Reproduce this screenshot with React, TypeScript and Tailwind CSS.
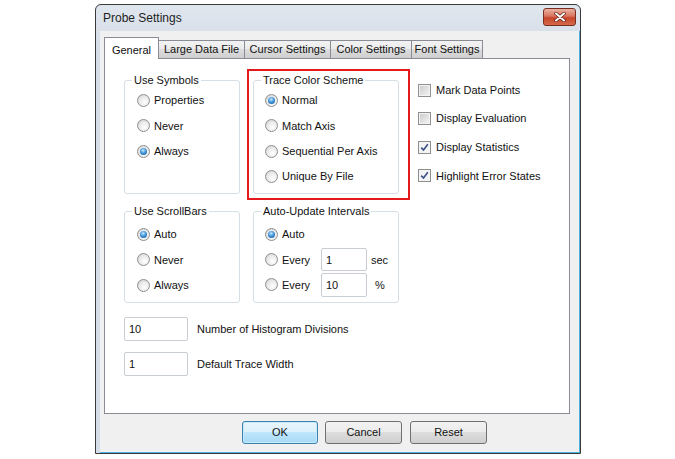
import type { ReactNode } from "react";

function Radio({ checked }: { checked?: boolean }) {
  return (
    <span className="flex h-[13px] w-[13px] shrink-0 items-center justify-center rounded-full border border-[#8e8f8f] bg-[radial-gradient(circle_at_60%_65%,#ffffff,#e8e8e8_55%,#c9c9c9)]">
      {checked && (
        <span className="h-[7px] w-[7px] rounded-full bg-[radial-gradient(circle_at_45%_35%,#c4e8ff,#3a8fd4_50%,#16518c)]" />
      )}
    </span>
  );
}

function RadioRow({ label, checked }: { label: string; checked?: boolean }) {
  return (
    <div className="flex h-[25.3px] items-center gap-[4px]">
      <Radio checked={checked} />
      <span>{label}</span>
    </div>
  );
}

function GroupBox({ label, className, children }: { label: string; className: string; children: ReactNode }) {
  return (
    <div className={`relative rounded-[3px] border border-[#d5dfe5] ${className}`}>
      <span className="absolute -top-[8px] left-[7px] bg-white px-[2px] leading-[14px]">{label}</span>
      {children}
    </div>
  );
}

function Checkbox({ label, checked }: { label: string; checked?: boolean }) {
  return (
    <div className="flex h-[16px] items-center gap-[5px]">
      <span className="flex h-[13px] w-[13px] shrink-0 items-center justify-center border border-[#8e8f8f] bg-[#f4f4f4] p-[1px]">
        {checked ? (
          <svg width="9" height="9" viewBox="0 0 9 9">
            <path d="M1.2 4.6 L3.5 7 L7.8 1.2" fill="none" stroke="#3d4f8a" strokeWidth="1.6" />
          </svg>
        ) : (
          <span className="h-full w-full bg-[linear-gradient(135deg,#cfcfcf,#f1f1f1)]" />
        )}
      </span>
      <span>{label}</span>
    </div>
  );
}

function TextBox({ value, className }: { value: string; className: string }) {
  return (
    <div className={`flex items-center rounded-[2px] border border-[#c9cdd4] bg-white pl-[4px] ${className}`}>
      {value}
    </div>
  );
}

const tabs = [
  { label: "General", w: "w-[55px]" },
  { label: "Large Data File", w: "w-[86px]" },
  { label: "Cursor Settings", w: "w-[86px]" },
  { label: "Color Settings", w: "w-[81px]" },
  { label: "Font Settings", w: "w-[71px]" },
];

export default function App() {
  return (
    <div className="min-h-screen bg-white pl-[95px] pt-[4px] font-['Liberation_Sans',Arial,sans-serif] text-[11px] text-[#111]">
      <div className="flex h-[450px] w-[486px] flex-col rounded-t-[6px] border border-[#3a3a3a] bg-[linear-gradient(#e0e6ee,#d5dde8_40px,#d5dde8)]">
        {/* title bar */}
        <div className="flex h-[26px] shrink-0 items-start justify-between pl-[7px] pr-[4px]">
          <span className="mt-[6px] text-[12px] leading-[15px] text-[#1e1e1e]">Probe Settings</span>
          <div className="mt-[3px] flex h-[18px] w-[33px] items-center justify-center rounded-[3px] border border-[#7a2c1e] bg-[linear-gradient(#eab2a4,#d9735e_45%,#c7452c_55%,#d66a4c)]">
            <svg width="12" height="10" viewBox="0 0 12 10">
              <path d="M2 1.5 L10 8.5 M10 1.5 L2 8.5" stroke="#5a1a10" strokeWidth="3.4" strokeLinecap="round" />
              <path d="M2 1.5 L10 8.5 M10 1.5 L2 8.5" stroke="#ffffff" strokeWidth="2" strokeLinecap="round" />
            </svg>
          </div>
        </div>

        {/* client */}
        <div className="ml-[4px] flex flex-1 flex-col border-r border-b border-[#4fb0e2] bg-[#f0f0f0] pt-[6px]">
          <div className="flex h-[21px] items-end pl-[4px]">
            {tabs.map((t, i) =>
              i === 0 ? (
                <div
                  key={t.label}
                  className={`relative z-10 -mb-px flex h-[22px] ${t.w} items-start justify-center border border-b-0 border-[#898c95] bg-white pt-[4px]`}
                >
                  {t.label}
                </div>
              ) : (
                <div
                  key={t.label}
                  className={`flex h-[18px] ${t.w} items-center justify-center border border-b-0 border-l-0 border-[#898c95] bg-[linear-gradient(#f2f2f2,#ebebeb_50%,#dddddd_50%,#cfcfcf)]`}
                >
                  {t.label}
                </div>
              )
            )}
          </div>

          {/* panel */}
          <div className="ml-[4px] h-[356px] w-[466px] border border-[#898c95] bg-white pl-[19px] pt-[21px]">
            <div className="flex items-start">
              <GroupBox label="Use Symbols" className="h-[114px] w-[116px] pl-[12px] pt-[7px]">
                <RadioRow label="Properties" />
                <RadioRow label="Never" />
                <RadioRow label="Always" checked />
              </GroupBox>

              <div className="relative ml-[13px]">
                <GroupBox label="Trace Color Scheme" className="h-[114px] w-[146px] pl-[11px] pt-[7px]">
                  <RadioRow label="Normal" checked />
                  <RadioRow label="Match Axis" />
                  <RadioRow label="Sequential Per Axis" />
                  <RadioRow label="Unique By File" />
                </GroupBox>
                <div className="pointer-events-none absolute -top-[11px] -right-[11px] -bottom-[6px] -left-[6px] border-2 border-[#e3191c]" />
              </div>

              <div className="ml-[19px] mt-[2px] flex flex-col gap-[12.6px]">
                <Checkbox label="Mark Data Points" />
                <Checkbox label="Display Evaluation" />
                <Checkbox label="Display Statistics" checked />
                <Checkbox label="Highlight Error States" checked />
              </div>
            </div>

            <div className="mt-[17px] flex items-start">
              <GroupBox label="Use ScrollBars" className="h-[92px] w-[116px] pl-[12px] pt-[10px]">
                <RadioRow label="Auto" checked />
                <RadioRow label="Never" />
                <RadioRow label="Always" />
              </GroupBox>

              <GroupBox label="Auto-Update Intervals" className="ml-[13px] h-[92px] w-[146px] pl-[11px] pt-[10px]">
                <RadioRow label="Auto" checked />
                <div className="flex h-[25px] items-center">
                  <div className="w-[56px]">
                    <RadioRow label="Every" />
                  </div>
                  <TextBox value="1" className="h-[23px] w-[46px]" />
                  <span className="ml-[4px]">sec</span>
                </div>
                <div className="flex h-[25px] items-center">
                  <div className="w-[56px]">
                    <RadioRow label="Every" />
                  </div>
                  <TextBox value="10" className="h-[24px] w-[46px]" />
                  <span className="ml-[8px]">%</span>
                </div>
              </GroupBox>
            </div>

            <div className="mt-[14px] flex items-center">
              <TextBox value="10" className="h-[24px] w-[64px]" />
              <span className="ml-[9px]">Number of Histogram Divisions</span>
            </div>
            <div className="mt-[11px] flex items-center">
              <TextBox value="1" className="h-[24px] w-[64px]" />
              <span className="ml-[9px]">Default Trace Width</span>
            </div>
          </div>

          {/* buttons */}
          <div className="mt-[7px] flex gap-[7px] pl-[142px]">
            <button className="h-[23px] w-[76px] rounded-[3px] border border-[#3c7fb1] bg-[linear-gradient(#eaf6fd,#d9f0fc_50%,#bee6fd_50%,#a7d9f5)] shadow-[inset_0_0_0_1px_#c8ecfd]">
              OK
            </button>
            <button className="h-[23px] w-[77px] rounded-[3px] border border-[#707070] bg-[linear-gradient(#f2f2f2,#ebebeb_50%,#dddddd_50%,#cfcfcf)]">
              Cancel
            </button>
            <button className="ml-[1px] h-[23px] w-[77px] rounded-[3px] border border-[#707070] bg-[linear-gradient(#f2f2f2,#ebebeb_50%,#dddddd_50%,#cfcfcf)]">
              Reset
            </button>
          </div>
        </div>
      </div>
    </div>
  );
}
